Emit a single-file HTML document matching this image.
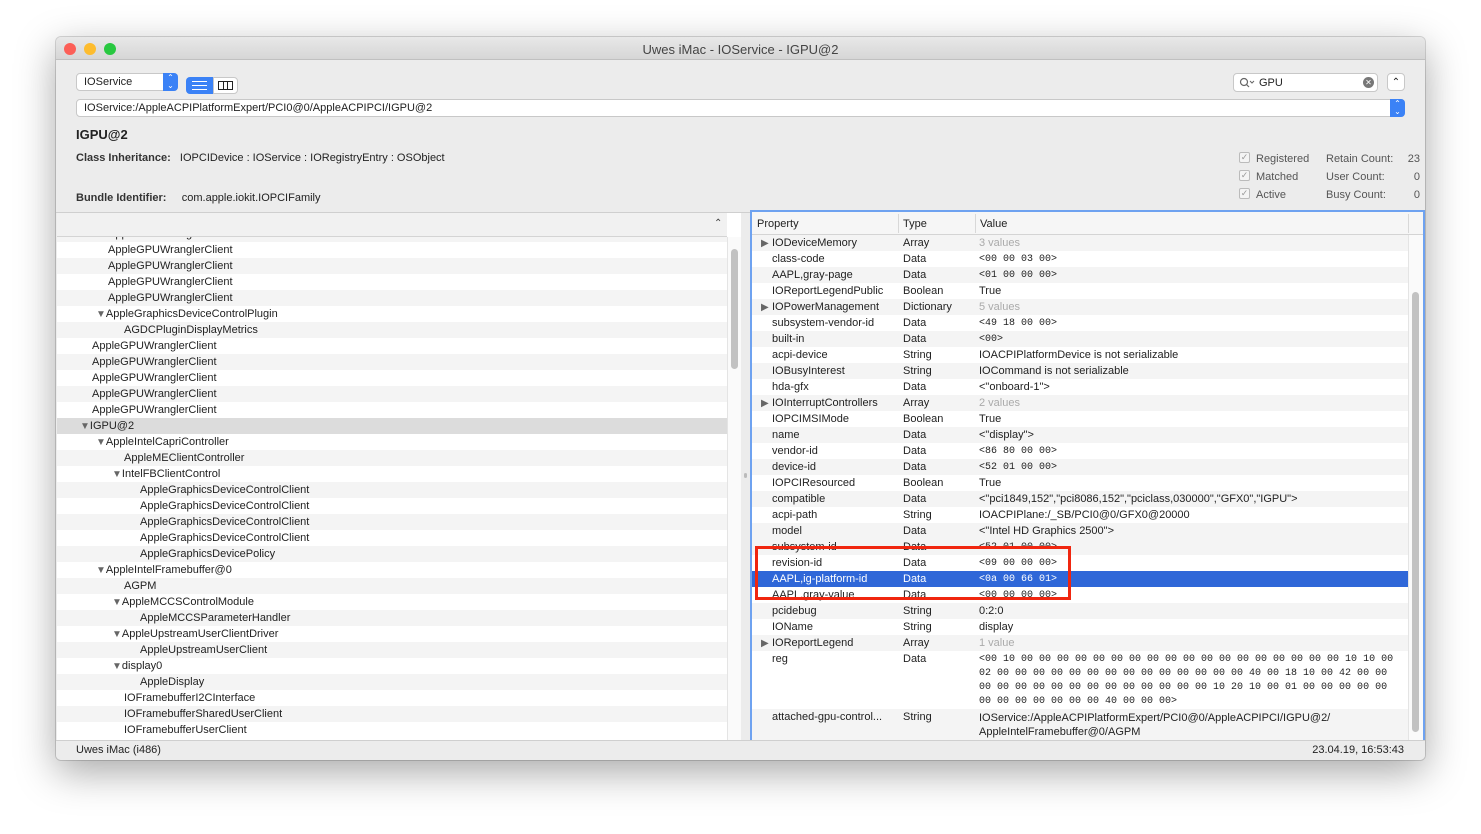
<!DOCTYPE html>
<html><head><meta charset="utf-8"><style>
*{margin:0;padding:0;box-sizing:border-box}
body{width:1481px;height:834px;background:#fff;font-family:"Liberation Sans",sans-serif;font-size:11px;color:#222;position:relative;overflow:hidden}
.win{position:absolute;left:56px;top:37px;width:1369px;height:723px;background:#ececec;border-radius:5px;box-shadow:0 12px 40px rgba(0,0,0,.35),0 0 0 1px rgba(0,0,0,.15);overflow:hidden}
.a{position:absolute;white-space:nowrap}
.r{position:absolute;height:16px;line-height:17px;white-space:nowrap}
.m{font-family:"Liberation Mono",monospace;font-size:10px}
.g{color:#aaa}
.tri{font-size:10px;color:#666}
</style></head><body>
<div class="win">
<div class="a" style="left:0;top:0;width:1369px;height:23px;background:linear-gradient(#e8e8e8,#d6d6d6);border-bottom:1px solid #c0c0c0"></div>
<div class="a" style="left:8px;top:6px;width:12px;height:12px;border-radius:6px;background:#fc5f57"></div>
<div class="a" style="left:28px;top:6px;width:12px;height:12px;border-radius:6px;background:#fdbc2e"></div>
<div class="a" style="left:48px;top:6px;width:12px;height:12px;border-radius:6px;background:#28c840"></div>
<div class="a" style="left:0;width:1369px;top:5px;text-align:center;font-size:13px;color:#444">Uwes iMac - IOService - IGPU@2</div>

<div class="a" style="left:20px;top:36px;width:102px;height:18px;background:#fff;border:1px solid #c8c8c8;border-radius:4px;padding-left:7px;line-height:17px">IOService</div>
<div class="a" style="left:107px;top:36px;width:15px;height:18px;background:#3b82f6;border-radius:0 4px 4px 0;color:#fff;font-size:8px;text-align:center;line-height:8px;padding-top:1px">⌃<br>⌄</div>
<div class="a" style="left:130px;top:40px;width:27px;height:17px;background:#3b82f6;border-radius:4px 0 0 4px"></div>
<div class="a" style="left:136px;top:44px;width:15px;height:9px;border-top:1px solid #fff;border-bottom:1px solid #fff"></div>
<div class="a" style="left:136px;top:48px;width:15px;height:1px;background:#fff"></div>
<div class="a" style="left:157px;top:40px;width:25px;height:17px;background:#fff;border:1px solid #c8c8c8;border-radius:0 4px 4px 0"></div>
<div class="a" style="left:162px;top:44px;width:15px;height:9px;border:1px solid #222"></div>
<div class="a" style="left:167px;top:44px;width:5px;height:9px;border-left:1px solid #222;border-right:1px solid #222"></div>

<div class="a" style="left:20px;top:62px;width:1329px;height:18px;background:#fff;border:1px solid #c8c8c8;border-radius:4px;padding-left:7px;line-height:17px">IOService:/AppleACPIPlatformExpert/PCI0@0/AppleACPIPCI/IGPU@2</div>
<div class="a" style="left:1334px;top:62px;width:15px;height:18px;background:#3b82f6;border-radius:0 4px 4px 0;color:#fff;font-size:8px;text-align:center;line-height:8px;padding-top:1px">⌃<br>⌄</div>

<div class="a" style="left:1177px;top:36px;width:145px;height:19px;background:#fff;border:1px solid #c8c8c8;border-radius:4px"></div>
<svg class="a" style="left:1183px;top:40px" width="16" height="12"><circle cx="5" cy="5" r="3.5" fill="none" stroke="#666" stroke-width="1.2"/><line x1="7.5" y1="7.5" x2="10" y2="10" stroke="#666" stroke-width="1.2"/><path d="M11 4 L13 6 L15 4" fill="none" stroke="#666"/></svg>
<div class="a" style="left:1203px;top:40px;font-size:11px">GPU</div>
<div class="a" style="left:1307px;top:40px;width:11px;height:11px;border-radius:6px;background:#777;color:#fff;font-size:8px;text-align:center;line-height:11px">✕</div>
<div class="a" style="left:1331px;top:36px;width:18px;height:18px;background:#fff;border:1px solid #c8c8c8;border-radius:4px;text-align:center;font-size:10px;line-height:18px">⌃</div>

<div class="a" style="left:20px;top:90px;font-size:13px;font-weight:bold">IGPU@2</div>
<div class="a" style="left:20px;top:115px"><b style="color:#333">Class Inheritance:</b>&nbsp;&nbsp; IOPCIDevice : IOService : IORegistryEntry : OSObject</div>
<div class="a" style="left:20px;top:155px"><b style="color:#333">Bundle Identifier:</b>&nbsp;&nbsp;&nbsp;&nbsp; com.apple.iokit.IOPCIFamily</div>

<div class="a" style="left:1183px;top:115px;width:11px;height:11px;border:1px solid #bbb;border-radius:2px;background:#f4f4f4;font-size:9px;color:#999;line-height:9px;text-align:center">✓</div>
<div class="a" style="left:1183px;top:133px;width:11px;height:11px;border:1px solid #bbb;border-radius:2px;background:#f4f4f4;font-size:9px;color:#999;line-height:9px;text-align:center">✓</div>
<div class="a" style="left:1183px;top:151px;width:11px;height:11px;border:1px solid #bbb;border-radius:2px;background:#f4f4f4;font-size:9px;color:#999;line-height:9px;text-align:center">✓</div>
<div class="a" style="left:1200px;top:116px;color:#555">Registered</div>
<div class="a" style="left:1200px;top:134px;color:#555">Matched</div>
<div class="a" style="left:1200px;top:152px;color:#555">Active</div>
<div class="a" style="left:1270px;top:116px;color:#555">Retain Count:</div>
<div class="a" style="left:1270px;top:134px;color:#555">User Count:</div>
<div class="a" style="left:1270px;top:152px;color:#555">Busy Count:</div>
<div class="a" style="left:1350px;top:116px;width:14px;text-align:right;color:#555">23</div>
<div class="a" style="left:1350px;top:134px;width:14px;text-align:right;color:#555">0</div>
<div class="a" style="left:1350px;top:152px;width:14px;text-align:right;color:#555">0</div>

<div class="a" style="left:0;top:175px;width:1369px;height:1px;background:#cfcfcf"></div>

<!-- left pane -->
<div class="a" style="left:1px;top:176px;width:684px;height:527px;background:#fff;overflow:hidden">
<div style="position:absolute;left:0;top:13px;width:670px">
<div class="r" style="top:0;width:670px;background:#f4f4f4;left:0;padding-left:51px">AppleGPUWranglerClient</div>
<div class="r" style="top:16px;width:670px;left:0;padding-left:51px">AppleGPUWranglerClient</div>
<div class="r" style="top:32px;width:670px;background:#f4f4f4;left:0;padding-left:51px">AppleGPUWranglerClient</div>
<div class="r" style="top:48px;width:670px;left:0;padding-left:51px">AppleGPUWranglerClient</div>
<div class="r" style="top:64px;width:670px;background:#f4f4f4;left:0;padding-left:51px">AppleGPUWranglerClient</div>
<div class="r" style="top:80px;width:670px;left:0;padding-left:39px"><span class="tri">▼</span>AppleGraphicsDeviceControlPlugin</div>
<div class="r" style="top:96px;width:670px;background:#f4f4f4;left:0;padding-left:67px">AGDCPluginDisplayMetrics</div>
<div class="r" style="top:112px;width:670px;left:0;padding-left:35px">AppleGPUWranglerClient</div>
<div class="r" style="top:128px;width:670px;background:#f4f4f4;left:0;padding-left:35px">AppleGPUWranglerClient</div>
<div class="r" style="top:144px;width:670px;left:0;padding-left:35px">AppleGPUWranglerClient</div>
<div class="r" style="top:160px;width:670px;background:#f4f4f4;left:0;padding-left:35px">AppleGPUWranglerClient</div>
<div class="r" style="top:176px;width:670px;left:0;padding-left:35px">AppleGPUWranglerClient</div>
<div class="r" style="top:192px;width:670px;background:#dcdcdc;left:0;padding-left:23px"><span class="tri">▼</span>IGPU@2</div>
<div class="r" style="top:208px;width:670px;left:0;padding-left:39px"><span class="tri">▼</span>AppleIntelCapriController</div>
<div class="r" style="top:224px;width:670px;background:#f4f4f4;left:0;padding-left:67px">AppleMEClientController</div>
<div class="r" style="top:240px;width:670px;left:0;padding-left:55px"><span class="tri">▼</span>IntelFBClientControl</div>
<div class="r" style="top:256px;width:670px;background:#f4f4f4;left:0;padding-left:83px">AppleGraphicsDeviceControlClient</div>
<div class="r" style="top:272px;width:670px;left:0;padding-left:83px">AppleGraphicsDeviceControlClient</div>
<div class="r" style="top:288px;width:670px;background:#f4f4f4;left:0;padding-left:83px">AppleGraphicsDeviceControlClient</div>
<div class="r" style="top:304px;width:670px;left:0;padding-left:83px">AppleGraphicsDeviceControlClient</div>
<div class="r" style="top:320px;width:670px;background:#f4f4f4;left:0;padding-left:83px">AppleGraphicsDevicePolicy</div>
<div class="r" style="top:336px;width:670px;left:0;padding-left:39px"><span class="tri">▼</span>AppleIntelFramebuffer@0</div>
<div class="r" style="top:352px;width:670px;background:#f4f4f4;left:0;padding-left:67px">AGPM</div>
<div class="r" style="top:368px;width:670px;left:0;padding-left:55px"><span class="tri">▼</span>AppleMCCSControlModule</div>
<div class="r" style="top:384px;width:670px;background:#f4f4f4;left:0;padding-left:83px">AppleMCCSParameterHandler</div>
<div class="r" style="top:400px;width:670px;left:0;padding-left:55px"><span class="tri">▼</span>AppleUpstreamUserClientDriver</div>
<div class="r" style="top:416px;width:670px;background:#f4f4f4;left:0;padding-left:83px">AppleUpstreamUserClient</div>
<div class="r" style="top:432px;width:670px;left:0;padding-left:55px"><span class="tri">▼</span>display0</div>
<div class="r" style="top:448px;width:670px;background:#f4f4f4;left:0;padding-left:83px">AppleDisplay</div>
<div class="r" style="top:464px;width:670px;left:0;padding-left:67px">IOFramebufferI2CInterface</div>
<div class="r" style="top:480px;width:670px;background:#f4f4f4;left:0;padding-left:67px">IOFramebufferSharedUserClient</div>
<div class="r" style="top:496px;width:670px;left:0;padding-left:67px">IOFramebufferUserClient</div>
</div>
<div class="a" style="left:0;top:0;width:670px;height:24px;background:#f1f1f1;border-bottom:1px solid #d4d4d4"></div>
<div class="a" style="left:657px;top:5px;font-size:10px;color:#444">⌃</div>
<div class="a" style="left:670px;top:24px;width:14px;height:503px;background:#fafafa;border-left:1px solid #e4e4e4"></div>
<div class="a" style="left:674px;top:36px;width:7px;height:120px;background:#c2c2c2;border-radius:4px"></div>
</div>

<!-- right pane -->
<div class="a" style="left:694px;top:173px;width:675px;height:532px;border:2px solid #6ea2f0;background:#fff;overflow:hidden">
<div class="a" style="left:0;top:0;width:671px;height:23px;background:#f6f6f6;border-bottom:1px solid #d4d4d4"></div>
<div class="a" style="left:5px;top:6px">Property</div>
<div class="a" style="left:151px;top:6px">Type</div>
<div class="a" style="left:228px;top:6px">Value</div>
<div class="a" style="left:146px;top:2px;width:1px;height:19px;background:#d8d8d8"></div>
<div class="a" style="left:223px;top:2px;width:1px;height:19px;background:#d8d8d8"></div>
<div class="a" style="left:656px;top:2px;width:1px;height:19px;background:#d8d8d8"></div>
<div style="position:absolute;left:0;top:23px;width:656px">
<div class="r" style="top:0;width:656px;background:#f4f4f4"><span class="a tri" style="left:9px">▶</span><span class="a" style="left:20px">IODeviceMemory</span><span class="a" style="left:151px">Array</span><span class="a g" style="left:227px">3 values</span></div>
<div class="r" style="top:16px;width:656px"><span class="a" style="left:20px">class-code</span><span class="a" style="left:151px">Data</span><span class="a m" style="left:227px">&lt;00 00 03 00&gt;</span></div>
<div class="r" style="top:32px;width:656px;background:#f4f4f4"><span class="a" style="left:20px">AAPL,gray-page</span><span class="a" style="left:151px">Data</span><span class="a m" style="left:227px">&lt;01 00 00 00&gt;</span></div>
<div class="r" style="top:48px;width:656px"><span class="a" style="left:20px">IOReportLegendPublic</span><span class="a" style="left:151px">Boolean</span><span class="a" style="left:227px">True</span></div>
<div class="r" style="top:64px;width:656px;background:#f4f4f4"><span class="a tri" style="left:9px">▶</span><span class="a" style="left:20px">IOPowerManagement</span><span class="a" style="left:151px">Dictionary</span><span class="a g" style="left:227px">5 values</span></div>
<div class="r" style="top:80px;width:656px"><span class="a" style="left:20px">subsystem-vendor-id</span><span class="a" style="left:151px">Data</span><span class="a m" style="left:227px">&lt;49 18 00 00&gt;</span></div>
<div class="r" style="top:96px;width:656px;background:#f4f4f4"><span class="a" style="left:20px">built-in</span><span class="a" style="left:151px">Data</span><span class="a m" style="left:227px">&lt;00&gt;</span></div>
<div class="r" style="top:112px;width:656px"><span class="a" style="left:20px">acpi-device</span><span class="a" style="left:151px">String</span><span class="a" style="left:227px">IOACPIPlatformDevice is not serializable</span></div>
<div class="r" style="top:128px;width:656px;background:#f4f4f4"><span class="a" style="left:20px">IOBusyInterest</span><span class="a" style="left:151px">String</span><span class="a" style="left:227px">IOCommand is not serializable</span></div>
<div class="r" style="top:144px;width:656px"><span class="a" style="left:20px">hda-gfx</span><span class="a" style="left:151px">Data</span><span class="a" style="left:227px">&lt;"onboard-1"&gt;</span></div>
<div class="r" style="top:160px;width:656px;background:#f4f4f4"><span class="a tri" style="left:9px">▶</span><span class="a" style="left:20px">IOInterruptControllers</span><span class="a" style="left:151px">Array</span><span class="a g" style="left:227px">2 values</span></div>
<div class="r" style="top:176px;width:656px"><span class="a" style="left:20px">IOPCIMSIMode</span><span class="a" style="left:151px">Boolean</span><span class="a" style="left:227px">True</span></div>
<div class="r" style="top:192px;width:656px;background:#f4f4f4"><span class="a" style="left:20px">name</span><span class="a" style="left:151px">Data</span><span class="a" style="left:227px">&lt;"display"&gt;</span></div>
<div class="r" style="top:208px;width:656px"><span class="a" style="left:20px">vendor-id</span><span class="a" style="left:151px">Data</span><span class="a m" style="left:227px">&lt;86 80 00 00&gt;</span></div>
<div class="r" style="top:224px;width:656px;background:#f4f4f4"><span class="a" style="left:20px">device-id</span><span class="a" style="left:151px">Data</span><span class="a m" style="left:227px">&lt;52 01 00 00&gt;</span></div>
<div class="r" style="top:240px;width:656px"><span class="a" style="left:20px">IOPCIResourced</span><span class="a" style="left:151px">Boolean</span><span class="a" style="left:227px">True</span></div>
<div class="r" style="top:256px;width:656px;background:#f4f4f4"><span class="a" style="left:20px">compatible</span><span class="a" style="left:151px">Data</span><span class="a" style="left:227px">&lt;"pci1849,152","pci8086,152","pciclass,030000","GFX0","IGPU"&gt;</span></div>
<div class="r" style="top:272px;width:656px"><span class="a" style="left:20px">acpi-path</span><span class="a" style="left:151px">String</span><span class="a" style="left:227px">IOACPIPlane:/_SB/PCI0@0/GFX0@20000</span></div>
<div class="r" style="top:288px;width:656px;background:#f4f4f4"><span class="a" style="left:20px">model</span><span class="a" style="left:151px">Data</span><span class="a" style="left:227px">&lt;"Intel HD Graphics 2500"&gt;</span></div>
<div class="r" style="top:304px;width:656px;background:#f4f4f4"><span class="a" style="left:20px">subsystem-id</span><span class="a" style="left:151px">Data</span><span class="a m" style="left:227px">&lt;52 01 00 00&gt;</span></div>
<div class="r" style="top:320px;width:656px"><span class="a" style="left:20px">revision-id</span><span class="a" style="left:151px">Data</span><span class="a m" style="left:227px">&lt;09 00 00 00&gt;</span></div>
<div class="r" style="top:336px;width:656px;background:#2f67d8;color:#fff"><span class="a" style="left:20px">AAPL,ig-platform-id</span><span class="a" style="left:151px">Data</span><span class="a m" style="left:227px">&lt;0a 00 66 01&gt;</span></div>
<div class="r" style="top:352px;width:656px"><span class="a" style="left:20px">AAPL,gray-value</span><span class="a" style="left:151px">Data</span><span class="a m" style="left:227px">&lt;00 00 00 00&gt;</span></div>
<div class="r" style="top:368px;width:656px;background:#f4f4f4"><span class="a" style="left:20px">pcidebug</span><span class="a" style="left:151px">String</span><span class="a" style="left:227px">0:2:0</span></div>
<div class="r" style="top:384px;width:656px"><span class="a" style="left:20px">IOName</span><span class="a" style="left:151px">String</span><span class="a" style="left:227px">display</span></div>
<div class="r" style="top:400px;width:656px;background:#f4f4f4"><span class="a tri" style="left:9px">▶</span><span class="a" style="left:20px">IOReportLegend</span><span class="a" style="left:151px">Array</span><span class="a g" style="left:227px">1 value</span></div>
<div class="r" style="top:416px;width:656px;height:58px"><span class="a" style="left:20px">reg</span><span class="a" style="left:151px">Data</span><span class="a m" style="left:227px;line-height:14px;top:2px">&lt;00 10 00 00 00 00 00 00 00 00 00 00 00 00 00 00 00 00 00 00 10 10 00<br>02 00 00 00 00 00 00 00 00 00 00 00 00 00 00 40 00 18 10 00 42 00 00<br>00 00 00 00 00 00 00 00 00 00 00 00 00 10 20 10 00 01 00 00 00 00 00<br>00 00 00 00 00 00 00 40 00 00 00&gt;</span></div>
<div class="r" style="top:474px;width:656px;height:32px;background:#f4f4f4"><span class="a" style="left:20px">attached-gpu-control...</span><span class="a" style="left:151px">String</span><span class="a" style="left:227px;line-height:14px;top:2px">IOService:/AppleACPIPlatformExpert/PCI0@0/AppleACPIPCI/IGPU@2/<br>AppleIntelFramebuffer@0/AGPM</span></div>
</div>
<div class="a" style="left:656px;top:23px;width:15px;height:505px;background:#fafafa;border-left:1px solid #e4e4e4"></div>
<div class="a" style="left:660px;top:80px;width:7px;height:440px;background:#c2c2c2;border-radius:4px"></div>
</div>
<div class="a" style="left:688px;top:436px;width:3px;height:5px;background:#bbb;border-radius:2px"></div>

<!-- red box -->
<div class="a" style="left:699px;top:509px;width:316px;height:54px;border:3px solid #f0260f"></div>

<!-- status -->
<div class="a" style="left:0;top:703px;width:1369px;height:20px;background:#ececec;border-top:1px solid #cfcfcf"></div>
<div class="a" style="left:20px;top:707px">Uwes iMac (i486)</div>
<div class="a" style="left:1250px;top:707px;width:98px;text-align:right">23.04.19, 16:53:43</div>
</div>
</body></html>
